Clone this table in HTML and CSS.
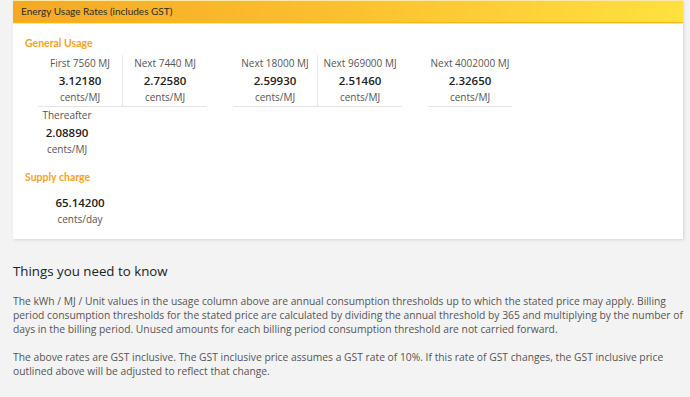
FILE: index.html
```html
<!DOCTYPE html>
<html>
<head>
<meta charset="utf-8">
<link rel="stylesheet" href="styles.css">
</head>
<body>
<div class="page">
  <section class="card">
    <header class="card-head">Energy Usage Rates (includes GST)</header>
    <div class="card-body">
      <h3 class="sub">General Usage</h3>
      <div class="tiers">
        <div class="group">
          <div class="cell divided"><div class="lbl">First 7560 MJ</div><div class="val">3.12180</div><div class="unit">cents/MJ</div></div>
          <div class="cell"><div class="lbl">Next 7440 MJ</div><div class="val">2.72580</div><div class="unit">cents/MJ</div></div>
        </div>
        <div class="group">
          <div class="cell divided"><div class="lbl">Next 18000 MJ</div><div class="val">2.59930</div><div class="unit">cents/MJ</div></div>
          <div class="cell"><div class="lbl">Next 969000 MJ</div><div class="val">2.51460</div><div class="unit">cents/MJ</div></div>
        </div>
        <div class="group">
          <div class="cell"><div class="lbl">Next 4002000 MJ</div><div class="val">2.32650</div><div class="unit">cents/MJ</div></div>
        </div>
      </div>
      <div class="tiers">
        <div class="cell narrow"><div class="lbl">Thereafter</div><div class="val">2.08890</div><div class="unit">cents/MJ</div></div>
      </div>
      <h3 class="sub supply">Supply charge</h3>
      <div class="tiers supply-row">
        <div class="cell"><div class="val">65.14200</div><div class="unit">cents/day</div></div>
      </div>
    </div>
  </section>
  <section class="info">
    <h2>Things you need to know</h2>
    <p>The kWh / MJ / Unit values in the usage column above are annual consumption thresholds up to which the stated price may apply. Billing period consumption thresholds for the stated price are calculated by dividing the annual threshold by 365 and multiplying by the number of days in the billing period. Unused amounts for each billing period consumption threshold are not carried forward.</p>
    <p>The above rates are GST inclusive. The GST inclusive price assumes a GST rate of 10%. If this rate of GST changes, the GST inclusive price outlined above will be adjusted to reflect that change.</p>
  </section>
</div>
</body>
</html>
```
FILE: styles.css
```css
html, body { margin: 0; padding: 0; }
body {
  background: #f3f3f3;
  font-family: "Open Sans", sans-serif;
  color: #555;
}
.page {
  width: 670px;
  padding-left: 13px;
}
.card {
  background: #fff;
  border-top: 1px solid #fde9a6;
  box-shadow: 1px 1px 3px rgba(0,0,0,0.12);
  padding-bottom: 11px;
}
.card-head {
  height: 21px;
  line-height: 21px;
  padding-left: 8px;
  font-family: "Lato", sans-serif;
  font-size: 10px;
  color: #2b2b2b;
  background: linear-gradient(90deg, #f7a823 0%, #fbc12f 50%, #ffe13f 100%);
  border-bottom: 1px solid #f6bb12;
  box-shadow: 0 1px 0 #fde7a0;
}
.card-body {
  padding: 12px 12px 0;
}
.sub {
  margin: 0;
  font-family: "Lato", sans-serif;
  font-weight: 700;
  font-size: 10.5px;
  line-height: 17px;
  color: #f7a21b;
}
.sub.supply { margin-top: 11px; }
.tiers {
  display: flex;
  column-gap: 26px;
  margin-left: 13px;
}
.sub + .tiers { margin-top: 3px; }
.tiers.supply-row { margin-top: 8px; }
.group {
  display: flex;
  border-bottom: 1px solid #e4e4e4;
}
.cell {
  width: 84px;
  text-align: center;
}
.cell.divided { border-right: 1px solid #e6e6e6; }
.cell.narrow { width: 58px; }
.lbl, .unit {
  font-size: 10px;
  line-height: 17px;
  color: #555;
}
.val {
  font-size: 11.5px;
  font-weight: 600;
  line-height: 17px;
  color: #222;
}
.info h2 {
  margin: 21px 0 0;
  font-size: 13.3px;
  font-weight: 400;
  line-height: 22px;
  color: #222;
}
.info p {
  margin: 12px 0 0;
  font-size: 10.3px;
  line-height: 14.2px;
  color: #555;
}
.info p + p { margin-top: 13.4px; }
```
